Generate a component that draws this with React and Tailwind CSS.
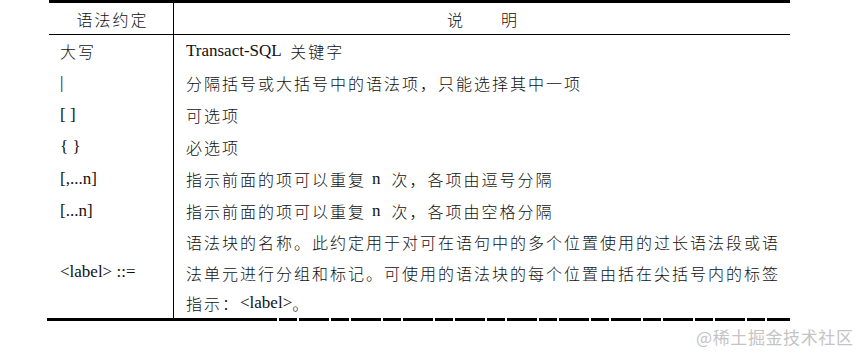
import React from "react";

const latin = "font-['Liberation_Serif',serif] text-[17px] tracking-normal";

function C({ children }) {
  return (
    <span className="font-['Noto_Sans_CJK_SC',sans-serif] text-[16px] tracking-[2px] font-light text-[#111]">
      {children}
    </span>
  );
}
function L({ children }) {
  return <span className={latin}>{children}</span>;
}
function N() {
  return <span className={latin + " ml-[6px] mr-[11px]"}>n</span>;
}

const rows = [
  [<C>大写</C>, <><L>Transact-SQL&nbsp;&nbsp;</L><C>关键字</C></>],
  [<L>|</L>, <C>分隔括号或大括号中的语法项，只能选择其中一项</C>],
  [<L>[ ]</L>, <C>可选项</C>],
  [<L>{"{ }"}</L>, <C>必选项</C>],
  [<L>[,...n]</L>, <><C>指示前面的项可以重复</C><N /><C>次，各项由逗号分隔</C></>],
  [<L>[...n]</L>, <><C>指示前面的项可以重复</C><N /><C>次，各项由空格分隔</C></>],
];

export default function App() {
  return (
    <div className="w-[862px] h-[354px] bg-white text-[#111] relative overflow-hidden">
      <div className="ml-[49px] w-[741px]">
        <div className="h-[3px] bg-black" />
        <div className="flex h-[32px] border-b border-black">
          <div className="w-[125px] border-r border-black flex items-center justify-center pl-[3px]">
            <C>语法约定</C>
          </div>
          <div className="flex-1 flex items-center pl-[273px]">
            <C>说</C>
            <span className="w-[36px]" />
            <C>明</C>
          </div>
        </div>
        {rows.map((r, i) => (
          <div key={i} className="flex h-[32px]">
            <div className="w-[125px] border-r border-black flex items-center pl-[11px]">{r[0]}</div>
            <div className="flex-1 flex items-center pl-[12px]">{r[1]}</div>
          </div>
        ))}
        <div className="flex h-[92px] -mt-[1px]">
          <div className="w-[125px] border-r border-black flex items-center pl-[11px]">
            <L>&lt;label&gt; ::=</L>
          </div>
          <div className="flex-1 pl-[12px] flex flex-col">
            <div className="h-[31px] flex items-center whitespace-nowrap"><C>语法块的名称。此约定用于对可在语句中的多个位置使用的过长语法段或语</C></div>
            <div className="h-[31px] flex items-center whitespace-nowrap"><C>法单元进行分组和标记。可使用的语法块的每个位置由括在尖括号内的标签</C></div>
            <div className="h-[30px] flex items-center"><C>指示：</C><L>&lt;label&gt;</L><C>。</C></div>
          </div>
        </div>
      </div>
      <div className="ml-[47px] w-[743px] flex h-[3px]">
        <div className="w-[200px] bg-black" />
        <div className="flex-1 bg-[repeating-linear-gradient(90deg,#000_0_30px,transparent_30px_32px,#000_32px_50px,transparent_50px_52px)]" />
      </div>
      <div className="absolute left-[696px] top-[326px] text-[#c4c4c4] font-['Noto_Sans_CJK_SC',sans-serif] text-[17px] tracking-[0.6px] leading-[22px]">
        @稀土掘金技术社区
      </div>
    </div>
  );
}
